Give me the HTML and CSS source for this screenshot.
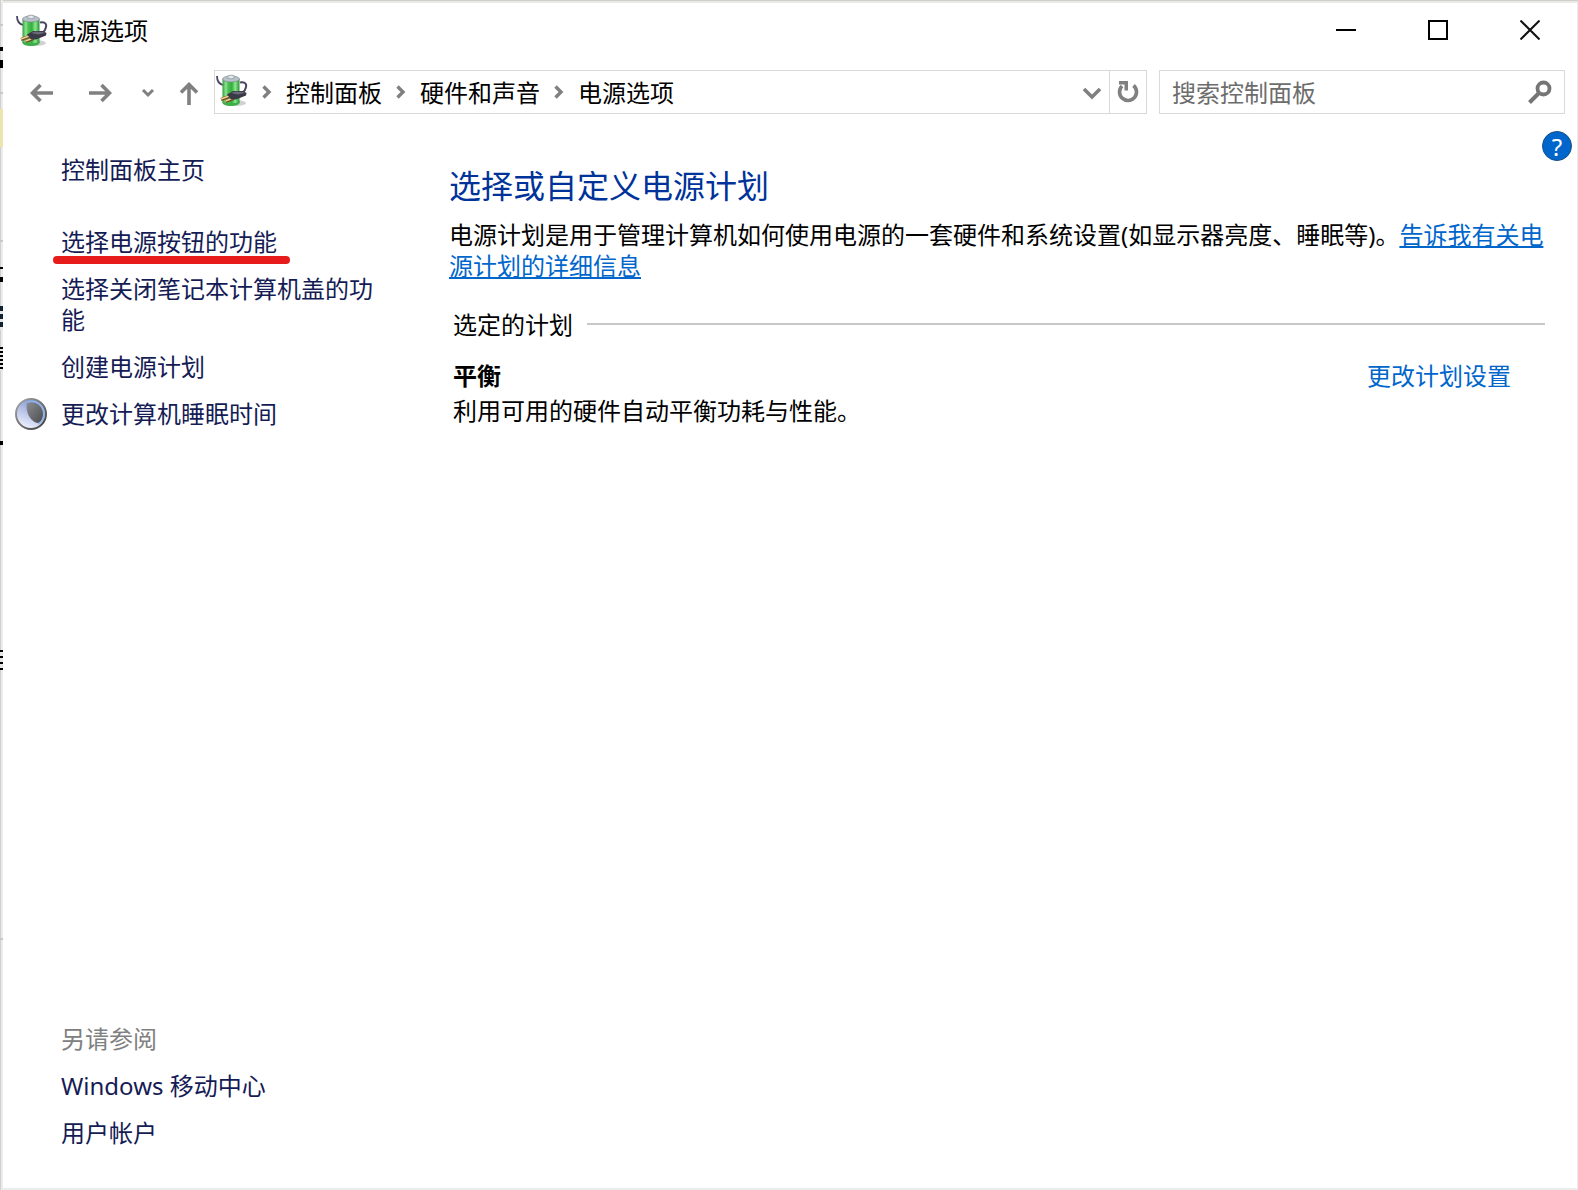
FILE: index.html
```html
<!DOCTYPE html>
<html lang="zh-CN">
<head>
<meta charset="utf-8">
<title>电源选项</title>
<meta name="viewport" content="width=device-width, initial-scale=1">
<link rel="stylesheet" href="styles.css">
</head>
<body>
<svg width="0" height="0" class="defs" aria-hidden="true">
  <defs>
    <linearGradient id="cell" x1="0" x2="1" y1="0" y2="0">
      <stop offset="0" stop-color="#2f9a3a"/><stop offset=".2" stop-color="#8fe592"/><stop offset=".32" stop-color="#4cc452"/>
      <stop offset=".55" stop-color="#35ad40"/><stop offset=".75" stop-color="#8be98b"/><stop offset="1" stop-color="#2b8f38"/>
    </linearGradient>
    <radialGradient id="cap"><stop offset="0" stop-color="#fff"/><stop offset="1" stop-color="#a9b4bd"/></radialGradient>
    <linearGradient id="moon" x1=".7" x2=".3" y1="0" y2="1">
      <stop offset="0" stop-color="#7395cf"/><stop offset=".45" stop-color="#b3bfe6"/><stop offset="1" stop-color="#f1f3ff"/>
    </linearGradient>
    <linearGradient id="rim" x1="0" x2="1" y1="0" y2="1"><stop offset="0" stop-color="#aaa"/><stop offset="1" stop-color="#3b3b3b"/></linearGradient>
    <linearGradient id="shade" x1="0" x2="1" y1="0" y2="1"><stop offset="0" stop-color="#8a8d92"/><stop offset="1" stop-color="#4b4c4e"/></linearGradient>
    <symbol id="battery" viewBox="0 0 32 33">
      <ellipse cx="20" cy="29" rx="10" ry="3" fill="#000" opacity=".18"/>
      <path d="M1 2c0 5 2 8 6 9" fill="none" stroke="#4a4763" stroke-width="1.800"/>
      <path d="M24 8.500c4-1 7 1 6 4.500-.5 2-1 4-3 5" fill="none" stroke="#4a4763" stroke-width="2"/>
      <path d="M6.500 5v23c0 5 17 5 17 0V5z" fill="url(#cell)"/>
      <path d="M6.500 27c1 3 16 3 17 0v2c-1 4-16 4-17 0z" fill="#3fae4a"/>
      <ellipse cx="15" cy="5" rx="8.500" ry="3" fill="#b8c2c8" stroke="#7e8b90" stroke-width=".7"/>
      <ellipse cx="15" cy="3" rx="4" ry="2" fill="url(#cap)" stroke="#8d9aa3" stroke-width=".5"/>
      <path d="M5 25.500l8-3M9.500 27.500l8-3" stroke="#6b4a20" stroke-width="3"/>
      <path d="M5 25l8-3M9.500 27l8-3" stroke="#f2cf93" stroke-width="1.800"/>
      <path d="M11 20.500l6-3.500 10 0 3.500 2-.5 2.500-10 4-5 0z" fill="#3a3a46"/>
      <path d="M15 19l4-1.500 8 .5 2 1-7 1.500z" fill="#686878"/>
    </symbol>
    <symbol id="crumb" viewBox="0 0 10 14"><path d="M1.500 1.500l5.500 5.500-5.500 5.500" fill="none" stroke="#808080" stroke-width="3.400"/></symbol>
  </defs>
</svg>

<div class="window">
  <header class="titlebar">
    <svg class="app-icon" aria-hidden="true"><use href="#battery"/></svg>
    <h1 class="title">电源选项</h1>
    <div class="caption-buttons">
      <button type="button" aria-label="最小化"><svg width="20" height="20"><path d="M0 10h20" stroke="#000" stroke-width="2"/></svg></button>
      <button type="button" aria-label="最大化"><svg width="20" height="20"><path d="M1 1h18v18H1z" fill="none" stroke="#000" stroke-width="2"/></svg></button>
      <button type="button" aria-label="关闭"><svg width="20" height="20"><path d="M.5.5l19 19m0-19l-19 19" stroke="#111" stroke-width="2"/></svg></button>
    </div>
  </header>

  <nav class="toolbar" aria-label="导航">
    <div class="history">
      <button type="button" aria-label="后退"><svg width="24" height="20"><path d="M23 10H3M10.500 2L2.500 10l8 8" fill="none" stroke="#808080" stroke-width="3.600"/></svg></button>
      <button type="button" aria-label="前进"><svg width="24" height="20"><path d="M1 10h20M13.500 2l8 8-8 8" fill="none" stroke="#808080" stroke-width="3.600"/></svg></button>
      <button type="button" class="recent" aria-label="最近的位置"><svg width="14" height="10"><path d="M2 2l5 5 5-5" fill="none" stroke="#808080" stroke-width="3"/></svg></button>
      <button type="button" class="up" aria-label="上移"><svg width="20" height="24"><path d="M10 23V3M2 10.500L10 2.500l8 8" fill="none" stroke="#808080" stroke-width="3.600"/></svg></button>
    </div>
    <div class="address">
      <svg class="app-icon" aria-hidden="true"><use href="#battery"/></svg>
      <ol class="crumbs">
        <li><svg width="10" height="14"><use href="#crumb"/></svg><a href="#">控制面板</a></li>
        <li><svg width="10" height="14"><use href="#crumb"/></svg><a href="#">硬件和声音</a></li>
        <li><svg width="10" height="14"><use href="#crumb"/></svg><a href="#">电源选项</a></li>
      </ol>
      <button type="button" class="drop" aria-label="以前的位置"><svg width="20" height="14"><path d="M2 3l8 8 8-8" fill="none" stroke="#808080" stroke-width="3.600"/></svg></button>
      <button type="button" class="refresh" aria-label="刷新"><svg width="22" height="22"><path d="M16.500 4.500a8.500 8.500 0 1 1-11.500.5" fill="none" stroke="#808080" stroke-width="3.600"/><path d="M2 0h9v9.500H7.500V3.600H2z" fill="#808080"/></svg></button>
    </div>
    <form class="search" role="search">
      <input type="search" placeholder="搜索控制面板" aria-label="搜索控制面板">
      <button type="button" aria-label="搜索"><svg width="24" height="24"><circle cx="15.500" cy="8.500" r="6" fill="none" stroke="#757575" stroke-width="3.800"/><path d="M11 13L1.500 22.500" stroke="#757575" stroke-width="4"/></svg></button>
    </form>
  </nav>

  <div class="content">
    <aside class="sidebar">
      <a class="home" href="#">控制面板主页</a>
      <ul class="links">
        <li><a class="marked" href="#">选择电源按钮的功能</a></li>
        <li><a href="#">选择关闭笔记本计算机盖的功能</a></li>
        <li><a href="#">创建电源计划</a></li>
        <li class="with-icon">
          <svg width="32" height="32" viewBox="0 0 32 32" aria-hidden="true"><circle cx="16" cy="16" r="15" fill="url(#moon)" stroke="url(#rim)" stroke-width="2"/><path d="M12 5c7-3 16 2 16 11 0 5-2 8-5 9C15 24 10 13 12 5z" fill="url(#shade)"/><path d="M12 4c8-3 17 3 17 12 0 5-3 9-6 10" fill="none" stroke="#8fb2e8" stroke-width="1.500"/></svg>
          <a href="#">更改计算机睡眠时间</a>
        </li>
      </ul>
      <section class="see-also">
        <h2>另请参阅</h2>
        <ul class="links">
          <li><a href="#">Windows 移动中心</a></li>
          <li><a href="#">用户帐户</a></li>
        </ul>
      </section>
    </aside>

    <main class="main">
      <button type="button" class="help" aria-label="帮助">?</button>
      <h2 class="heading">选择或自定义电源计划</h2>
      <p class="intro">电源计划是用于管理计算机如何使用电源的一套硬件和系统设置(如显示器亮度、睡眠等)。<a href="#">告诉我有关电源计划的详细信息</a></p>
      <section class="plans">
        <h3 class="group">选定的计划</h3>
        <div class="plan">
          <strong>平衡</strong>
          <a href="#">更改计划设置</a>
        </div>
        <p class="plan-note">利用可用的硬件自动平衡功耗与性能。</p>
      </section>
    </main>
  </div>
</div>
</body>
</html>
```
FILE: styles.css
```css
* {
  box-sizing: border-box;
}

body {
  margin: 0;
  min-height: 100vh;
  display: flex;
  padding: 3px 1px 2px 3px;
  font-family: "Noto Sans", "Noto Sans CJK SC", sans-serif;
  font-size: 24px;
  line-height: 31px;
  color: #000;
  /* slivers of the windows behind show past the left edge */
  background:
    linear-gradient(#000, #000) 0 47px / 3px 4px no-repeat,
    linear-gradient(#000, #000) 0 60px / 3px 8px no-repeat,
    linear-gradient(#c8c8c8, #c8c8c8) 0 24px / 3px 2px no-repeat,
    linear-gradient(#c8c8c8, #c8c8c8) 0 92px / 3px 2px no-repeat,
    linear-gradient(#ece5ae, #ece5ae) 0 109px / 3px 38px no-repeat,
    linear-gradient(#c8c8c8, #c8c8c8) 0 240px / 3px 2px no-repeat,
    linear-gradient(#000, #000) 0 267px / 3px 2px no-repeat,
    linear-gradient(#000, #000) 0 277px / 3px 5px no-repeat,
    repeating-linear-gradient(#123 0 5px, #e6e6e6 5px 8px) 0 306px / 3px 24px no-repeat,
    repeating-linear-gradient(#000 0 2px, #e6e6e6 2px 4px) 0 347px / 3px 24px no-repeat,
    linear-gradient(#000, #000) 0 441px / 3px 4px no-repeat,
    repeating-linear-gradient(#000 0 2px, #e6e6e6 2px 6px) 0 650px / 3px 20px no-repeat,
    linear-gradient(#c8c8c8, #c8c8c8) 0 938px / 3px 2px no-repeat,
    linear-gradient(90deg, #cfcfcf 1px, #ececec 1px, #ececec 3px, transparent 3px),
    linear-gradient(#cfcfca 1px, #e9e9e6 1px, #e9e9e6 3px, #ececec 3px);
}

a {
  color: inherit;
  text-decoration: none;
}

button {
  display: flex;
  align-items: center;
  justify-content: center;
  border: 0;
  padding: 0;
  background: none;
}

h1, h2, h3, p, ul, ol {
  margin: 0;
  padding: 0;
  font-size: inherit;
  font-weight: 400;
  list-style: none;
}

.defs {
  position: absolute;
}

.window {
  flex: 1;
  display: flex;
  flex-direction: column;
  background: #fff;
}

.app-icon {
  flex: none;
  width: 32px;
  height: 33px;
}

/* title bar */
.titlebar {
  display: flex;
  align-items: center;
  height: 54px;
  padding-left: 13px;
}

.title {
  flex: 1;
  padding-left: 4px;
}

.caption-buttons {
  display: flex;
  align-self: stretch;
  padding-right: 1px;
}

.caption-buttons button {
  width: 92px;
}

/* toolbar */
.toolbar {
  display: flex;
  gap: 12px;
  padding: 13px 12px 0 0;
}

.history {
  display: flex;
  padding-left: 10px;
}

.history button {
  width: 58px;
  padding-top: 2px;
}

.history .recent {
  width: 38px;
}

.history .up {
  width: 43px;
  padding-top: 4px;
}

.toolbar .address {
  margin-left: -8px;
}

.address, .search {
  display: flex;
  align-items: center;
  height: 44px;
  border: 1px solid #d9d9d9;
}

.address {
  flex: 1;
  padding-left: 1px;
}

.address .app-icon {
  margin-bottom: 3px;
}

.crumbs {
  flex: 1;
  display: flex;
}

.crumbs li {
  display: flex;
  align-items: center;
}

.crumbs svg {
  margin: 0 14px;
}

.drop {
  width: 34px;
  height: 42px;
  padding-top: 2px;
}

.refresh {
  width: 37px;
  height: 42px;
  border-left: 1px solid #d9d9d9;
}

.search {
  width: 406px;
}

.search input {
  flex: 1;
  min-width: 0;
  height: 42px;
  border: 0;
  padding: 0 12px;
  font: inherit;
  background: none;
  outline: 0;
}

.search input::placeholder {
  color: #6d6d6d;
  opacity: 1;
}

.search button {
  width: 48px;
}

/* content */
.content {
  flex: 1;
  display: flex;
  padding-top: 17px;
}

.sidebar {
  flex: none;
  display: flex;
  flex-direction: column;
  width: 446px;
  padding: 23px 58px 40px;
  color: #151c55;
}

.home {
  margin-bottom: 41px;
}

.links {
  display: flex;
  flex-direction: column;
  gap: 16px;
}

.links a {
  display: block;
}

.links li {
  position: relative;
  align-self: flex-start;
}

/* hand-drawn red stroke under the first task */
.marked::after {
  content: "";
  position: absolute;
  left: -8px;
  right: -13px;
  bottom: -7px;
  height: 8px;
  border-radius: 4px;
  background: #e81b1b;
}

.with-icon {
  display: flex;
  align-items: center;
  gap: 14px;
  height: 31px;
  margin-left: -46px;
}

.see-also {
  display: flex;
  flex-direction: column;
  gap: 16px;
  margin-top: auto;
}

.see-also h2 {
  color: #808080;
}

.main {
  flex: 1;
  padding-right: 32px;
}

.help {
  width: 30px;
  height: 30px;
  margin: 0 -27px 4px auto;
  border: 1px solid #174f86;
  border-radius: 50%;
  background: #0066cc;
  color: #fff;
  font: inherit;
}

.heading {
  font-size: 32px;
  line-height: 42px;
  color: #003399;
}

.intro {
  margin-top: 12px;
}

.intro a {
  color: #0066cc;
  text-decoration: underline;
  text-decoration-thickness: 2px;
  text-underline-offset: 2px;
}

.plans {
  margin-top: 28px;
  padding-left: 4px;
}

.group {
  display: flex;
  align-items: center;
  gap: 14px;
}

.group::after {
  content: "";
  flex: 1;
  height: 2px;
  margin-bottom: 1px;
  background: #c8c8c8;
}

.plan {
  display: flex;
  justify-content: space-between;
  margin-top: 20px;
  padding-right: 34px;
}

.plan a {
  color: #0066cc;
}

.plan-note {
  margin-top: 4px;
}
```
